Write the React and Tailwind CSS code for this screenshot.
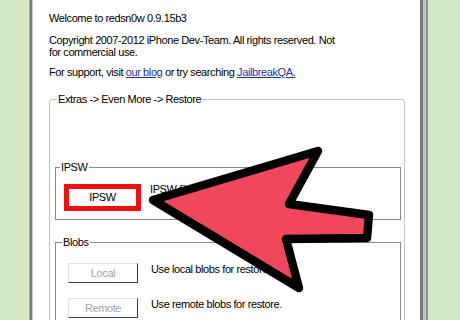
import React from "react";

function WinButton({ children, disabled }) {
  return (
    <div
      className={`w-[70px] h-[20px] flex items-center justify-center border border-t-[#e4e4e4] border-l-[#e4e4e4] border-r-[#3c3c3c] border-b-[#3c3c3c] bg-white ${
        disabled ? "text-[#a4a4a4]" : "text-black"
      }`}
    >
      {children}
    </div>
  );
}

export default function App() {
  return (
    <div
      className="relative w-[460px] h-[320px] overflow-hidden flex bg-white text-[11px] tracking-[-0.4px] text-black"
      style={{ fontFamily: '"Liberation Sans", Arial, sans-serif' }}
    >
      {/* left background */}
      <div className="w-[29px] bg-[#d3e7c5]" />
      <div className="w-[4px] flex">
        <div className="w-[1px] bg-[#a9a9a9]" />
        <div className="w-[2px] bg-[#7c7c7c]" />
        <div className="w-[1px] bg-[#cfcfcf]" />
      </div>

      {/* window body */}
      <div className="w-[387px] bg-white pl-[16px] pt-[12px]">
        <p className="leading-[13px]">Welcome to redsn0w 0.9.15b3</p>
        <p className="mt-[9px] leading-[12px]">
          Copyright 2007-2012 iPhone Dev-Team. All rights reserved. Not
          <br />
          for commercial use.
        </p>
        <p className="mt-[8px] leading-[12px]">
          For support, visit{" "}
          <span className="text-[#1c36a6] underline">our blog</span> or try
          searching <span className="text-[#1c36a6] underline">JailbreakQA.</span>
        </p>

        <fieldset className="mt-[15px] w-[356px] h-[240px] border border-[#c4c4c4] rounded-[3px] pl-[5px]">
          <legend className="ml-[2px] px-[1px] leading-[13px]">
            Extras -&gt; Even More -&gt; Restore
          </legend>

          {/* IPSW group */}
          <fieldset className="mt-[55px] w-[346px] border border-[#8a8a8a] pl-[8px] pb-[8px]">
            <legend className="ml-[-4px] px-[1px] leading-[13px]">IPSW</legend>
            <div className="mt-[10px] flex items-center gap-[9px]">
              <div className="w-[77px] h-[27px] border-[5px] border-[#f20f12] bg-white flex items-center justify-center">
                IPSW
              </div>
              <span className="-mt-[16px]">IPSW file to use for restore.</span>
            </div>
          </fieldset>

          {/* Blobs group */}
          <fieldset className="mt-[16px] w-[346px] h-[120px] border border-[#8a8a8a] pl-[12px]">
            <legend className="-ml-[6px] px-[1px] leading-[13px]">Blobs</legend>
            <div className="mt-[14px] flex flex-col gap-[15px]">
              <div className="flex items-center gap-[13px]">
                <WinButton disabled>Local</WinButton>
                <span className="-mt-[7px]">Use local blobs for restore.</span>
              </div>
              <div className="flex items-center gap-[13px]">
                <WinButton disabled>Remote</WinButton>
                <span className="-mt-[7px]">Use remote blobs for restore.</span>
              </div>
            </div>
          </fieldset>
        </fieldset>
      </div>

      {/* right edge */}
      <div className="w-[8px] flex">
        <div className="w-[3px] bg-[#7a7a7a]" />
        <div className="w-[3px] bg-[#c2c2c2]" />
        <div className="w-[2px] bg-[#8e8e8e]" />
      </div>
      <div className="flex-1 bg-[#d3e7c5]" />

      {/* annotation arrow */}
      <svg
        className="absolute inset-0 pointer-events-none"
        width="460"
        height="320"
        viewBox="0 0 460 320"
      >
        <polygon
          points="153,200 318,151 289,204 369,215 367,238 286,239 299,288"
          fill="#f0475a"
          stroke="#000"
          strokeWidth="8.5"
          strokeLinejoin="round"
        />
      </svg>
    </div>
  );
}
